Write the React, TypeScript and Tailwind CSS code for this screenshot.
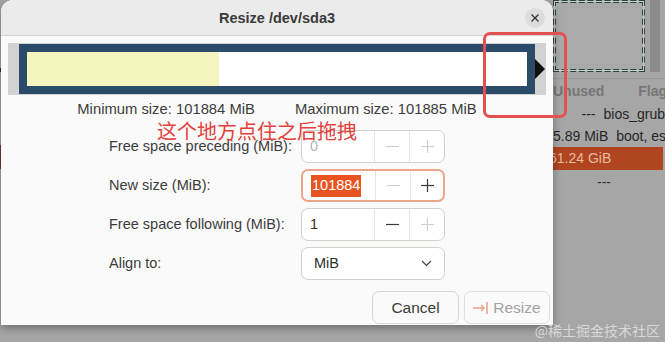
import type { ReactNode } from 'react'

const UI = { fontFamily: '"Liberation Sans", "Noto Sans", sans-serif' }
const CJK = { fontFamily: '"Noto Sans CJK SC", "Noto Sans", sans-serif' }

function Minus({ dim }: { dim?: boolean }) {
  return (
    <svg width="15" height="15" viewBox="0 0 15 15">
      <line x1="1" y1="7.5" x2="14" y2="7.5" stroke={dim ? '#cfcfcf' : '#3a3a3a'} strokeWidth="1.2" />
    </svg>
  )
}

function Plus({ dim }: { dim?: boolean }) {
  return (
    <svg width="15" height="15" viewBox="0 0 15 15">
      <line x1="1" y1="7.5" x2="14" y2="7.5" stroke={dim ? '#cfcfcf' : '#3a3a3a'} strokeWidth="1.2" />
      <line x1="7.5" y1="1" x2="7.5" y2="14" stroke={dim ? '#cfcfcf' : '#3a3a3a'} strokeWidth="1.2" />
    </svg>
  )
}

function Spin({
  value,
  focused,
  disabled,
  minusDim,
  plusDim,
}: {
  value: ReactNode
  focused?: boolean
  disabled?: boolean
  minusDim?: boolean
  plusDim?: boolean
}) {
  return (
    <div
      className={
        focused
          ? 'flex h-[33px] w-[144px] rounded-[7px] border-2 border-[#eba68b] bg-white'
          : 'flex h-[33px] w-[144px] rounded-[7px] border border-[#d4d0cc] bg-white'
      }
    >
      <div
        className={
          disabled
            ? 'flex w-[72px] items-center px-[8px] text-[14.5px] text-[#b4b4b4]'
            : 'flex w-[72px] items-center px-[8px] text-[14.5px] text-[#2e2e2e]'
        }
      >
        {value}
      </div>
      <div className="flex w-[35px] items-center justify-center border-l border-[#e6e3e0]">
        <Minus dim={minusDim} />
      </div>
      <div className="flex flex-1 items-center justify-center border-l border-[#e6e3e0]">
        <Plus dim={plusDim} />
      </div>
    </div>
  )
}

function Row({ label, children }: { label: string; children: ReactNode }) {
  return (
    <div className="flex items-center">
      <div className="w-[192px] text-[14.5px] text-[#3c3c3c]">{label}</div>
      {children}
    </div>
  )
}

export default function App() {
  return (
    <div className="relative h-[342px] w-[665px] overflow-hidden bg-[#a6a6a6]" style={UI}>
      {/* app window behind the dialog */}
      <div className="absolute left-[553px] top-0 flex w-[112px] flex-col">
        <div className="flex h-[74px] gap-[5px]">
          <div className="h-[72px] w-[92px] border-[3px] border-dashed border-[#2f3f4c] bg-[#aaaaaa] outline outline-1 -outline-offset-2 outline-[#c3d3b5]" />
          <div className="h-[72px] w-[10px] bg-[#8c8c8c]" />
        </div>
        <div className="mt-[4px] h-px w-full bg-[#999]" />
        <div className="flex h-[24px] items-center justify-between pr-[2px] text-[14px] font-bold text-[#777]">
          <span>Unused</span>
          <span className="mr-[-4px]">Flag</span>
        </div>
        <div className="flex h-[22px] items-center text-[14px] text-[#262626]">
          <span className="w-[58px] text-right">---</span>
          <span className="ml-[8px] whitespace-nowrap">bios_grub</span>
        </div>
        <div className="flex h-[22px] items-center text-[14px] text-[#262626]">
          <span className="w-[58px] whitespace-nowrap text-right">5.89 MiB</span>
          <span className="ml-[8px] whitespace-nowrap">boot, esp</span>
        </div>
        <div className="flex h-[23px] w-[110px] items-center bg-[#b1451f] text-[14px] text-[#e9b9a4]">
          <span className="ml-[-4px] whitespace-nowrap">61.24 GiB</span>
        </div>
        <div className="flex h-[24px] items-center text-[14px] text-[#333]">
          <span className="w-[58px] text-right">---</span>
        </div>
      </div>
      <div className="absolute left-0 top-[68px] h-[4px] w-[1px] bg-[#333]" />
      <div className="absolute left-0 top-[145px] h-[24px] w-[1px] bg-[#6b3b3b]" />

      {/* dialog */}
      <div className="absolute left-[1px] top-0 flex h-[325px] w-[552px] flex-col overflow-hidden rounded-t-[12px] bg-[#fafafa] shadow-[0_3px_8px_rgba(0,0,0,0.35)]">
        <div className="relative flex h-[36px] shrink-0 items-center justify-center border-b border-[#d4d4d4] bg-[#ebebeb]">
          <span className="pt-[2px] text-[14.5px] font-bold text-[#3a3a3a]">Resize /dev/sda3</span>
          <div className="absolute right-[8px] top-[8px] flex h-[20px] w-[20px] items-center justify-center rounded-full bg-[#dcdcdc]">
            <svg width="8" height="8" viewBox="0 0 8 8">
              <path d="M0.5 0.5L7.5 7.5M7.5 0.5L0.5 7.5" stroke="#333" strokeWidth="1.3" />
            </svg>
          </div>
        </div>

        {/* partition bar */}
        <div className="ml-[7px] mt-[7px] flex h-[52px] w-[538px] items-center bg-[#d2d2d2]">
          <div className="ml-[11px] flex h-[50px] w-[516px] border-[8px] border-[#2c4a69] bg-white">
            <div className="h-full w-[192px] bg-[#f5f6bf]" />
          </div>
          <svg width="10" height="20" viewBox="0 0 10 20">
            <path d="M0 0L10 10L0 20Z" fill="#111" />
          </svg>
        </div>

        <div className="mt-[3px] flex justify-center gap-[40px] text-[14.8px] text-[#3c3c3c]">
          <span>Minimum size: 101884 MiB</span>
          <span>Maximum size: 101885 MiB</span>
        </div>

        <div className="ml-[108px] mt-[10px] flex flex-col gap-[6px]">
          <Row label="Free space preceding (MiB):">
            <Spin value="0" disabled minusDim plusDim />
          </Row>
          <Row label="New size (MiB):">
            <Spin
              focused
              value={<span className="bg-[#e8541f] px-px text-white">101884</span>}
              minusDim
            />
          </Row>
          <Row label="Free space following (MiB):">
            <Spin value="1" plusDim />
          </Row>
          <Row label="Align to:">
            <div className="flex h-[33px] w-[144px] items-center justify-between rounded-[7px] border border-[#d4d0cc] bg-white pl-[12px] pr-[12px] text-[14.5px] text-[#2e2e2e]">
              <span>MiB</span>
              <svg width="11" height="7" viewBox="0 0 11 7">
                <path d="M1 1L5.5 5.5L10 1" fill="none" stroke="#444" strokeWidth="1.2" />
              </svg>
            </div>
          </Row>
        </div>

        <div className="mr-[3px] mt-[11px] flex justify-end gap-[5px]">
          <div className="flex h-[33px] w-[87px] items-center justify-center rounded-[7px] border border-[#d6d6d6] bg-[#fafafa] text-[15.5px] text-[#3a3a3a]">
            Cancel
          </div>
          <div className="flex h-[33px] w-[86px] items-center justify-center gap-[4px] rounded-[7px] border border-[#dedede] bg-[#fafafa] text-[15.5px] text-[#a3a3a3]">
            <svg width="16" height="12" viewBox="0 0 16 12">
              <path d="M0 6H11M8 3L11 6L8 9" fill="none" stroke="#eaa488" strokeWidth="1.5" />
              <line x1="14" y1="0" x2="14" y2="12" stroke="#eaa488" strokeWidth="1.6" />
            </svg>
            <span>Resize</span>
          </div>
        </div>
      </div>

      {/* annotation */}
      <div className="absolute left-[483px] top-[32px] h-[86px] w-[84px] rounded-[7px] border-[3px] border-[#e4504f]" />
      <div className="absolute left-[157px] top-[117px] text-[20px] leading-[28px] text-[#e3413c]" style={CJK}>
        这个地方点住之后拖拽
      </div>

      <div className="absolute bottom-[1px] right-[5px] text-[14px] text-[#d8d8d8]" style={CJK}>
        @稀土掘金技术社区
      </div>
    </div>
  )
}
